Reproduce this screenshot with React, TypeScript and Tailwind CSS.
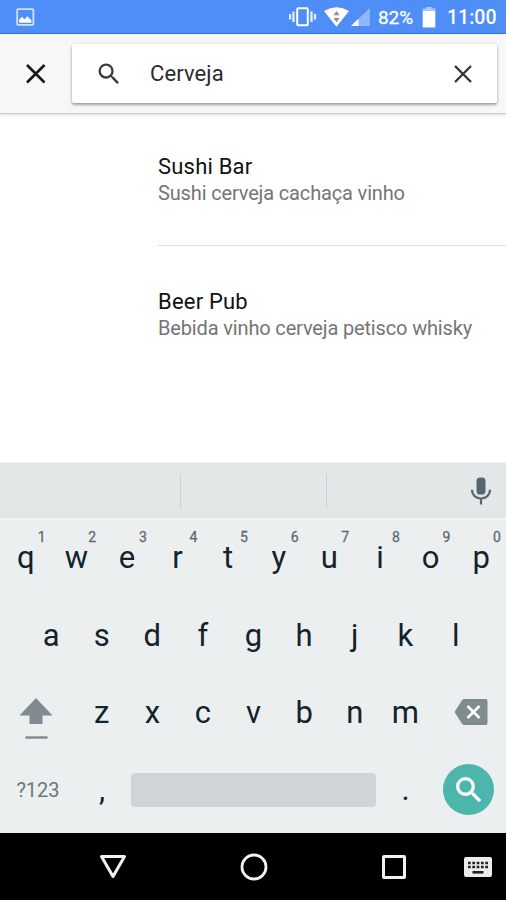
import React from 'react';

const TOP_ROW = [
    ['q', '1'], ['w', '2'], ['e', '3'], ['r', '4'], ['t', '5'],
    ['y', '6'], ['u', '7'], ['i', '8'], ['o', '9'], ['p', '0'],
];
const HOME_ROW = ['a', 's', 'd', 'f', 'g', 'h', 'j', 'k', 'l'];
const BOTTOM_ROW = ['z', 'x', 'c', 'v', 'b', 'n', 'm'];

const RESULTS = [
    { name: 'Sushi Bar', tags: 'Sushi cerveja cachaça vinho' },
    { name: 'Beer Pub', tags: 'Bebida vinho cerveja petisco whisky' },
];

const SEARCH_PATH =
    'M15.5 14h-.79l-.28-.27A6.471 6.471 0 0 0 16 9.5 6.5 6.5 0 1 0 9.5 16c1.61 0 3.09-.59 4.23-1.57l.27.28v.79l5 4.99L20.49 19l-4.99-5zm-6 0C7.01 14 5 11.99 5 9.5S7.01 5 9.5 5 14 7.01 14 9.5 11.99 14 9.5 14z';

const StatusBar: React.FC = () => (
    <header className="flex h-[34px] items-center border-b border-[#2f79e8] bg-[#4f8ef7] pt-px text-white">
        <svg className="ml-4 h-[18px] w-[19px]" viewBox="0 0 19 18">
            <rect x="1.2" y="1.2" width="16.2" height="15.6" rx="0.8" fill="none" stroke="#cfe3ff" strokeWidth="1.8" />
            <path d="M3.2 14.8v-3.2l2.8-2.8 2.6 2.4 2.8-3 4 4v2.6z" fill="#fff" />
        </svg>
        {/* vibrate, wifi, signal */}
        <svg className="ml-auto h-[22px] w-[83px]" viewBox="0 0 83 22">
            <rect x="8.2" y="2.3" width="10.6" height="17" rx="1" fill="none" stroke="#fff" strokeWidth="2" />
            <path d="M1 8v5.500M4.500 5.500v10.500M22.500 5.500v10.500M26 8v5.500" stroke="#e4eeff" strokeWidth="2.300" />
            <path d="M35 5Q47.500-2.400 60 5L47.500 20.800z" fill="#fff" />
            <path d="M47.500 5l3 4.200h-6zM47.500 16.200l3-4.200h-6z" fill="#8d8d8d" />
            <path d="M80.800 2v18H62z" fill="#8fb8fb" />
            <path d="M69.500 12.800V20H62z" fill="#fff" />
        </svg>
        <span className="ml-[6px] w-[38px] pt-[2px] text-[19px] leading-[32px] tracking-[-0.1px] whitespace-nowrap [-webkit-text-stroke:0.3px_white]">82%</span>
        <svg className="mt-px ml-[6px] h-[21px] w-[14px]" viewBox="0 0 14 21">
            <path d="M4 0h6v1.500h3.300v4H.7v-4H4z" fill="#a9c8fc" />
            <path d="M.7 4h12.600V20.500H.7z" fill="#fff" />
        </svg>
        <span className="mr-[10px] ml-[11px] w-[49px] pt-[2px] text-[19.5px] leading-[32px] font-medium whitespace-nowrap">11:00</span>
    </header>
);

const SearchBar: React.FC = () => (
    <div className="relative flex h-[80px] items-start border-b border-[#cbcbcb] bg-[#f7f7f7] pt-[10px] shadow-[0_1px_4px_rgba(0,0,0,0.15)]">
        <svg className="mt-5 ml-[26px] h-5 w-5" viewBox="0 0 20 20">
            <path d="M1 1l17.500 17.500M18.500 1L1 18.500" stroke="#161616" strokeWidth="2.600" />
        </svg>
        <div className="ml-[26px] flex h-[59px] w-[425px] items-center rounded-[2px] bg-white shadow-[0_2px_3px_rgba(0,0,0,0.34),0_0_3px_rgba(0,0,0,0.1)]">
            <svg className="ml-[23px] h-7 w-7" viewBox="0 0 24 24" fill="#3a3a3a">
                <path d={SEARCH_PATH} />
            </svg>
            <span className="ml-[27px] text-[22px] leading-7 tracking-[0.1px] text-[#2b2b2b]">Cerveja</span>
            <svg className="mr-[25px] ml-auto h-[18px] w-[18px]" viewBox="0 0 18 18">
                <path d="M1 1l16 16M17 1L1 17" stroke="#333" strokeWidth="2.300" />
            </svg>
        </div>
    </div>
);

const Results: React.FC = () => (
    <main className="h-[348px] bg-white pl-[158px] whitespace-nowrap">
        {RESULTS.map((item) => (
            <div key={item.name} className="pt-[41px] first:h-[132px] first:border-b first:border-[#dedede] first:pt-[38px]">
                <h2 className="-mb-0.5 text-[22px] leading-[30px] tracking-[0.2px] text-[#111]">{item.name}</h2>
                <p className="text-[20px] leading-[26px] tracking-[-0.15px] text-[#757575]">{item.tags}</p>
            </div>
        ))}
    </main>
);

const Keyboard: React.FC = () => (
    <div className="h-[371px] border-t border-[#eef0f0] bg-[#eceff0] text-[#14222b]">
        <div className="flex h-[57px] items-center border-b-2 border-[#f1f4f4] bg-[#e4e7e8]">
            <div className="h-[34px] w-[181px] border-r border-[#cbd0d2]" />
            <div className="h-[34px] w-[146px] border-r border-[#cbd0d2]" />
            <svg className="mr-[15px] ml-auto h-7 w-5" viewBox="0 0 20 28">
                <rect x="5.5" y="0.5" width="9" height="17" rx="3.6" fill="#56666f" />
                <path d="M1 12.800c0 5.200 4 8.700 9 8.700s9-3.500 9-8.700M10 21.500v6" fill="none" stroke="#56666f" strokeWidth="2.200" />
            </svg>
        </div>
        <div className="-mt-px grid h-[310px] grid-rows-4 text-[31px] leading-none">
            <div className="grid grid-cols-10">
                {TOP_ROW.map(([key, hint]) => (
                    <div key={key} className="relative flex items-center justify-center pl-px">
                        {key}
                        <span className="absolute top-[11px] right-[5px] text-[14px] text-[#5f6b71] [-webkit-text-stroke:0.3px_#5f6b71]">{hint}</span>
                    </div>
                ))}
            </div>
            <div className="grid grid-cols-9 px-[25.3px]">
                {HOME_ROW.map((key) => (
                    <div key={key} className="flex items-center justify-center pl-px">{key}</div>
                ))}
            </div>
            <div className="flex items-center">
                <div className="flex w-[76px] justify-center pr-[5px]">
                    <svg className="mt-[13px] h-[42px] w-[34px]" viewBox="0 0 34 42">
                        <path d="M17 0l16.500 17.500H23.500V26h-13v-8.500H.5z" fill="#7f8b8e" />
                        <path d="M6.500 39.500h22" stroke="#7f8b8e" strokeWidth="2.400" />
                    </svg>
                </div>
                {BOTTOM_ROW.map((key) => (
                    <div key={key} className="flex w-[50.6px] justify-center pl-px">{key}</div>
                ))}
                <svg className="mb-0.5 ml-[24px] h-[26px] w-[34px]" viewBox="0 0 34 26">
                    <path d="M10.500 0H31.500a2 2 0 0 1 2 2V24a2 2 0 0 1-2 2H10.500a3 3 0 0 1-2.300-1L.500 13 8.200 1a3 3 0 0 1 2.300-1z" fill="#7f8b8e" />
                    <path d="M13.500 7l12 12M25.500 7l-12 12" stroke="#fff" strokeWidth="2.700" />
                </svg>
            </div>
            <div className="flex items-center pb-px">
                <div className="w-[76px] text-center text-[20px] text-[#6b777c]">?123</div>
                <div className="w-[51px] pl-px text-center">,</div>
                <div className="ml-1 h-[34px] w-[245px] rounded-[4px] bg-[#cfd4d7]" />
                <div className="ml-1 w-[51px] text-center">.</div>
                <div className="ml-[12px] flex h-[51px] w-[51px] items-center justify-center rounded-full bg-[#4db6ac]">
                    <svg className="h-[34px] w-[34px]" viewBox="0 0 24 24" fill="#fff" stroke="#fff" strokeWidth="0.35">
                        <path d={SEARCH_PATH} />
                    </svg>
                </div>
            </div>
        </div>
    </div>
);

const NavBar: React.FC = () => (
    <nav className="flex h-[67px] items-center bg-black">
        <svg className="ml-[99px] h-[26px] w-7" viewBox="0 0 28 26" fill="none" stroke="#f2f2f2" strokeWidth="3">
            <path d="M2.500 2.500h23L14 22.500z" strokeLinejoin="round" />
        </svg>
        <svg className="ml-[112.500px] h-7 w-7" viewBox="0 0 28 28" fill="none" stroke="#f2f2f2" strokeWidth="2.800">
            <circle cx="14" cy="14" r="12" />
        </svg>
        <svg className="ml-[113.500px] h-[26px] w-[26px]" viewBox="0 0 26 26" fill="none" stroke="#f2f2f2" strokeWidth="3">
            <rect x="2.500" y="2.500" width="21" height="21" rx="0.500" />
        </svg>
        <svg className="ml-[57px] h-[22px] w-7" viewBox="0 0 28 22">
            <rect x="0" y="1" width="28" height="20" rx="2" fill="#ececec" />
            <path d="M4 7h20M4 11h20" stroke="#222" strokeWidth="2.400" strokeDasharray="2.700 1.620" />
            <path d="M8.500 16.300h11" stroke="#222" strokeWidth="2.600" />
        </svg>
    </nav>
);

const App: React.FC = () => {
    return (
        <div className="h-[900px] w-[506px] overflow-hidden bg-white font-['Roboto',sans-serif]">
            <StatusBar />
            <SearchBar />
            <Results />
            <Keyboard />
            <NavBar />
        </div>
    );
};

export default App;
